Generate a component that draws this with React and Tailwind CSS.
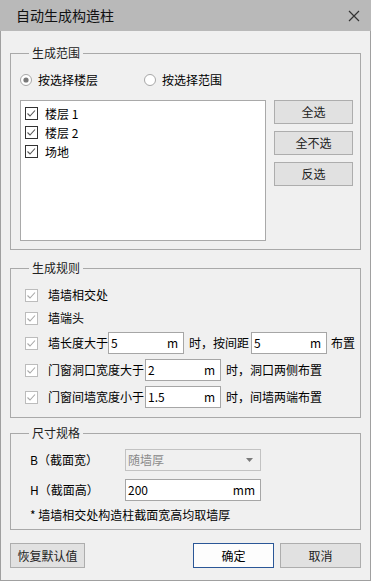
import React from "react";

const FONT = { fontFamily: '"Noto Sans CJK SC", "Noto Sans", sans-serif' };

function CheckBox({ dim }) {
  return (
    <svg width="13" height="13" viewBox="0 0 13 13" className="shrink-0">
      <rect x="0.5" y="0.5" width="12" height="12" fill="#fff" stroke={dim ? "#bcbcbc" : "#333"} />
      <polyline points="2.5,6.5 5,9 10,3.5" fill="none" stroke={dim ? "#a8a8a8" : "#555"} strokeWidth="1.1" />
    </svg>
  );
}

function Radio({ on }) {
  return (
    <svg width="12" height="12" viewBox="0 0 12 12" className="shrink-0">
      <circle cx="6" cy="6" r="5.5" fill="#fff" stroke="#a6a6a6" />
      {on && <circle cx="6" cy="6" r="2.6" fill="#7a7a7a" />}
    </svg>
  );
}

function Group({ title, className = "", inner = "", children }) {
  return (
    <div className={`border border-[#a9a9a9] ${className}`}>
      <div className="-mt-[9px] ml-[18px] w-fit bg-[#f0f0f0] px-[3px] text-[12px] leading-4 text-[#222]">
        {title}
      </div>
      <div className={inner}>{children}</div>
    </div>
  );
}

function UnitInput({ value, unit, className = "" }) {
  return (
    <div className={`flex h-[22px] items-center justify-between border border-[#a6a6a6] bg-white pl-[2px] pr-[5px] text-[12px] ${className}`}>
      <span>{value}</span>
      <span>{unit}</span>
    </div>
  );
}

function Btn({ children, className = "" }) {
  return (
    <div className={`flex items-center justify-center border border-[#adadad] bg-[#e1e1e1] text-[12px] text-[#222] ${className}`}>
      {children}
    </div>
  );
}

function RuleRow({ className = "", children }) {
  return (
    <div className={`flex h-[22px] items-center ${className}`}>
      <CheckBox dim />
      <div className="ml-[10px] flex items-center">{children}</div>
    </div>
  );
}

export default function App() {
  return (
    <div className="flex h-[581px] w-[371px] flex-col bg-[#f0f0f0] text-black" style={FONT}>
      <div className="flex h-[31px] shrink-0 items-center justify-between bg-[#b9b9b9] pl-4 pr-[11px]">
        <span className="text-[14px] text-[#111]">自动生成构造柱</span>
        <svg width="12" height="12" viewBox="0 0 12 12">
          <path d="M1 1L11 11M11 1L1 11" stroke="#333" strokeWidth="1.2" />
        </svg>
      </div>

      <div className="flex flex-1 flex-col border-x border-b border-[#a0a0a0] px-[9px] pt-[22px]">
        <Group title="生成范围" className="pb-2" inner="pl-[9px]">
          <div className="mt-[11px] flex h-4 items-center text-[12px]">
            <Radio on />
            <span className="ml-[6px]">按选择楼层</span>
            <span className="ml-[46px]"><Radio /></span>
            <span className="ml-[6px]">按选择范围</span>
          </div>
          <div className="mt-3 flex">
            <div className="h-[141px] w-[246px] border border-[#a9a9a9] bg-white pl-1 pt-[3px] text-[12px]">
              {["楼层 1", "楼层 2", "场地"].map((t) => (
                <div key={t} className="flex h-[19px] items-center">
                  <CheckBox />
                  <span className="ml-[7px]">{t}</span>
                </div>
              ))}
            </div>
            <div className="ml-2 flex flex-col gap-[7px]">
              <Btn className="h-[24px] w-[79px]">全选</Btn>
              <Btn className="h-[24px] w-[79px]">全不选</Btn>
              <Btn className="h-[24px] w-[79px]">反选</Btn>
            </div>
          </div>
        </Group>

        <Group title="生成规则" className="mt-[18px] pb-[9px] text-[12px]" inner="pl-[14px]">
          <RuleRow className="mt-2">墙墙相交处</RuleRow>
          <RuleRow className="mt-[1px]">墙端头</RuleRow>
          <RuleRow className="mt-[3px]">
            <span>墙长度大于</span>
            <UnitInput value="5" unit="m" className="w-[76px]" />
            <span className="ml-[5px]">时，按间距</span>
            <UnitInput value="5" unit="m" className="ml-[2px] w-[76px]" />
            <span className="ml-[4px]">布置</span>
          </RuleRow>
          <RuleRow className="mt-[5px]">
            <span>门窗洞口宽度大于</span>
            <UnitInput value="2" unit="m" className="ml-[1px] w-[76px]" />
            <span className="ml-[5px]">时，洞口两侧布置</span>
          </RuleRow>
          <RuleRow className="mt-[5px]">
            <span>门窗间墙宽度小于</span>
            <UnitInput value="1.5" unit="m" className="ml-[1px] w-[76px]" />
            <span className="ml-[5px]">时，间墙两端布置</span>
          </RuleRow>
        </Group>

        <Group title="尺寸规格" className="mt-[15px] pb-[6px] text-[12px]" inner="pl-[19px]">
          <div className="mt-2 flex h-[22px] items-center">
            <span className="w-[95px]">B（截面宽）</span>
            <div className="flex h-[22px] w-[136px] items-center justify-between border border-[#c2c2c2] bg-[#f0f0f0] pl-[2px] pr-[7px] text-[#8a8a8a]">
              <span>随墙厚</span>
              <svg width="7" height="4" viewBox="0 0 7 4">
                <path d="M0 0H7L3.5 4Z" fill="#7a7a7a" />
              </svg>
            </div>
          </div>
          <div className="mt-2 flex h-[22px] items-center">
            <span className="w-[95px]">H（截面高）</span>
            <UnitInput value="200" unit="mm" className="w-[136px] pr-[3px]" />
          </div>
          <div className="mt-[6px] h-4 leading-4">* 墙墙相交处构造柱截面宽高均取墙厚</div>
        </Group>

        <div className="mt-[13px] flex items-center">
          <Btn className="h-[25px] w-[75px]">恢复默认值</Btn>
          <div className="ml-auto flex gap-[6px]">
            <div className="flex h-[25px] w-[81px] items-center justify-center border border-[#2b5797] bg-[#fdfdfd] text-[12px]">
              确定
            </div>
            <Btn className="h-[25px] w-[81px]">取消</Btn>
          </div>
        </div>
      </div>
    </div>
  );
}
